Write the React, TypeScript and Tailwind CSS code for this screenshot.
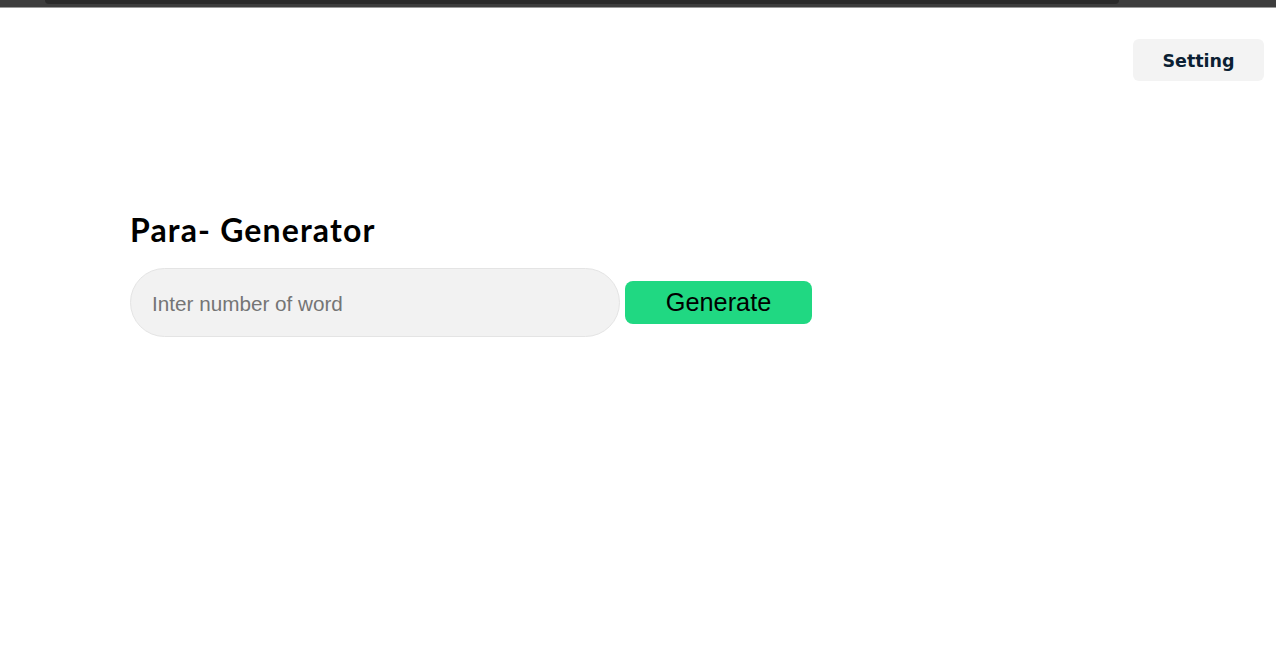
export default function App() {
  return (
    <div className="min-h-[663px] w-full bg-white">
      {/* window chrome strip seen at the top of the capture */}
      <div className="h-[8px] bg-[#3d3d3d] border-b border-[#9a9a9a]">
        <div className="ml-[45px] h-[4px] w-[1074px] rounded-b bg-[#2a2a2a]" />
      </div>

      <header className="flex justify-end pr-[12px] pt-[31px]">
        <button className="h-[42px] w-[131px] rounded-md bg-[#f3f3f3] pt-[3px] font-['DejaVu_Sans',sans-serif] text-[17.5px] font-bold text-[#0b1f33]">
          Setting
        </button>
      </header>

      <main className="pl-[130px] pt-[129px]">
        <h1 className="font-['Lato',sans-serif] text-[32px] font-bold leading-[40px] tracking-[1.15px] text-black">
          Para- Generator
        </h1>
        <div className="mt-[18px] flex items-center gap-[5px]">
          <input
            type="text"
            placeholder="Inter number of word"
            className="h-[69px] w-[490px] rounded-full border border-[#e4e4e4] bg-[#f2f2f2] px-[21px] pt-[2px] font-['Liberation_Sans',Arial,sans-serif] text-[20.7px] text-black outline-none placeholder:text-[#757575]"
          />
          <button className="h-[43px] w-[187px] rounded-lg bg-[#20d882] font-['Liberation_Sans',Arial,sans-serif] text-[25.3px] text-black">
            Generate
          </button>
        </div>
      </main>
    </div>
  );
}
